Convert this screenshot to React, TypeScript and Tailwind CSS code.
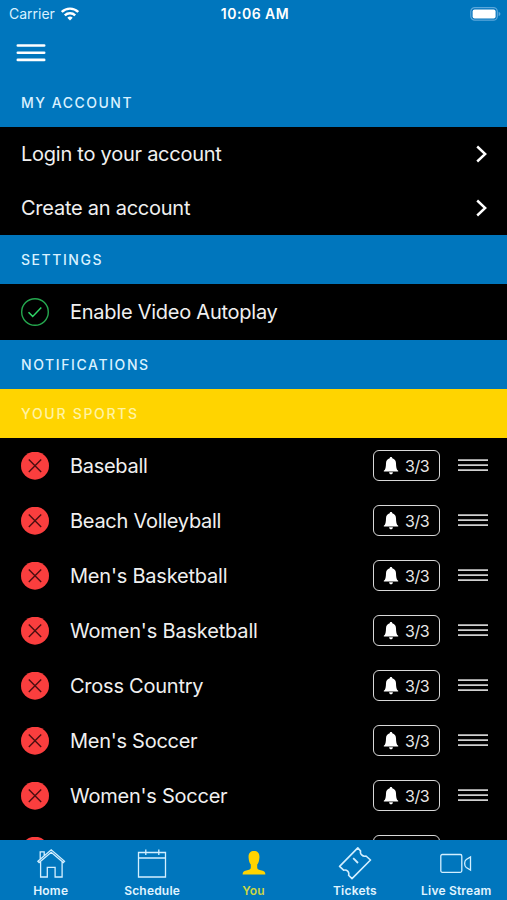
import React from "react";

const SPORTS: { name: string; tracking: string }[] = [
  { name: "Baseball", tracking: "tracking-[-0.3px]" },
  { name: "Beach Volleyball", tracking: "tracking-[-0.27px]" },
  { name: "Men's Basketball", tracking: "tracking-[-0.21px]" },
  { name: "Women's Basketball", tracking: "tracking-[-0.17px]" },
  { name: "Cross Country", tracking: "tracking-[-0.24px]" },
  { name: "Men's Soccer", tracking: "tracking-[-0.27px]" },
  { name: "Women's Soccer", tracking: "tracking-[-0.24px]" },
];

function StatusBar() {
  return (
    <div className="grid h-7 grid-cols-3 items-center pr-[6px] pl-[9px] text-sm text-white">
      <div className="flex items-center gap-[6px]">
        <span className="text-[14px] text-[#d9f1ff]">Carrier</span>
        <svg width="18" height="14" viewBox="0 0 18 14" fill="none" stroke="white" strokeWidth="2.4">
          <path d="M.8 5a11.600 11.600 0 0 1 16.400 0" />
          <path d="M3.800 8.400a7.400 7.400 0 0 1 10.400 0" />
          <path d="M9 13.600 6.300 10.800a3.900 3.900 0 0 1 5.400 0Z" fill="white" stroke="none" />
        </svg>
      </div>
      <span className="text-center font-semibold tracking-[0.5px] whitespace-nowrap">10:06 AM</span>
      <svg className="justify-self-end" width="31" height="14" viewBox="0 0 31 14">
        <rect x="0.8" y="0.6" width="26.5" height="12.6" rx="4" fill="#0072bc" stroke="#5ba8db" strokeWidth="1.2" />
        <rect x="2.6" y="2.4" width="23" height="9" rx="2" fill="white" />
        <path d="M28.600 4.700c2.400.9 2.400 3.500 0 4.400Z" fill="#5ba8db" />
      </svg>
    </div>
  );
}

function SectionTitle({ label, className }: { label: string; className: string }) {
  return (
    <h2 className={`flex h-[49px] shrink-0 items-center pl-[21px] text-sm font-medium ${className}`}>
      {label}
    </h2>
  );
}

function LinkRow({ label, className }: { label: string; className: string }) {
  return (
    <div className={`flex shrink-0 items-center justify-between pr-[19px] pl-[21px] text-xl font-normal tracking-[-0.25px] ${className}`}>
      <span>{label}</span>
      <svg width="12" height="18" viewBox="0 0 12 18" fill="none" stroke="white" strokeWidth="2.4">
        <path d="M1.200 1.500 9.200 9l-8 7.500" />
      </svg>
    </div>
  );
}

function RemoveIcon() {
  return (
    <svg className="mr-[21px] shrink-0" width="28" height="28" viewBox="0 0 28 28">
      <circle cx="14" cy="13.700" r="14" fill="#fa3e3e" />
      <path d="m7.800 7.500 12.400 12.400m0-12.400L7.800 19.900" stroke="#4a0e10" strokeWidth="1.4" />
    </svg>
  );
}

function SportRow({ name, tracking }: { name: string; tracking: string }) {
  return (
    <li className="flex h-[55px] shrink-0 items-center pr-[19px] pl-[21px]">
      <RemoveIcon />
      <span className={`grow text-xl ${tracking}`}>{name}</span>
      <div className="mr-[18px] flex h-[31px] w-[67px] items-center rounded-[6px] border-[1.5px] border-[#d8d8d8] pl-[9px]">
        <svg width="16" height="18" viewBox="0 0 14 17" fill="white">
          <path d="M7 0c.8 0 1.200.5 1.200 1.100 2.200.5 3.400 2.300 3.500 4.500.1 4 .4 6.200 2.100 7.300v.8H.2v-.8c1.700-1.100 2-3.300 2.100-7.300.1-2.200 1.300-4 3.500-4.500C5.800.5 6.200 0 7 0Z" />
          <path d="M5.200 14.400h3.600c-.1 1.300-.8 2-1.800 2s-1.700-.7-1.800-2Z" />
        </svg>
        <span className="ml-[6px] text-base tracking-[-0.4px] text-[#e8e8e8]">3/3</span>
      </div>
      <svg width="30" height="16" viewBox="0 0 30 16" stroke="#d0d0d0" strokeWidth="1.7">
        <path d="M0 2.200h30M0 7.200h30M0 12.200h30" />
      </svg>
    </li>
  );
}

function Tab({ label, active, children }: { label: string; active?: boolean; children: React.ReactNode }) {
  return (
    <div className={`flex flex-1 flex-col items-center ${active ? "text-[#ffd400]" : "text-[#d3efff]"}`}>
      <svg className="mt-[7px]" width="34" height="34" viewBox="0 0 34 34" fill="none" stroke="currentColor" strokeWidth="1.3">
        {children}
      </svg>
      <span className={`mt-[2px] text-[12px] leading-4 font-semibold tracking-[0.2px] whitespace-nowrap ${active ? "text-[#ccd644]" : "text-[#e0f4ff]"}`}>
        {label}
      </span>
    </div>
  );
}

export default function App() {
  return (
    <div className="flex h-[900px] w-[507px] flex-col overflow-hidden bg-black font-['Inter','Liberation_Sans',sans-serif] text-[#f0f0f0]">
      <header className="h-[78px] shrink-0 bg-[#0076bd]">
        <StatusBar />
        <svg className="mt-[15px] ml-4" width="30" height="20" viewBox="0 0 30 20" stroke="white" strokeWidth="2.6" strokeLinecap="round">
          <path d="M1.800 2.500h26.400M1.800 9.700h26.400M1.800 16.900h26.400" />
        </svg>
      </header>
      <SectionTitle label="MY ACCOUNT" className="bg-[#0076bd] tracking-[1.5px] text-[#d9f1ff]" />
      <LinkRow label="Login to your account" className="h-[54px]" />
      <LinkRow label="Create an account" className="h-[54px]" />
      <SectionTitle label="SETTINGS" className="bg-[#0076bd] tracking-[1.55px] text-[#d9f1ff]" />
      <div className="flex h-[56px] shrink-0 items-center pl-[21px]">
        <svg className="mr-[21px]" width="28" height="28" viewBox="0 0 28 28" fill="none">
          <circle cx="14" cy="14" r="13.300" stroke="#25a84f" strokeWidth="1.4" />
          <path d="m7.500 14.200 4.200 4.200L20.300 9.500" stroke="#2fd566" strokeWidth="1.5" />
        </svg>
        <span className="text-xl tracking-[-0.25px]">Enable Video Autoplay</span>
      </div>
      <SectionTitle label="NOTIFICATIONS" className="bg-[#0076bd] tracking-[1.6px] text-[#d9f1ff]" />
      <SectionTitle label="YOUR SPORTS" className="bg-[#ffd400] tracking-[1.7px] text-[#fff3a3]" />
      <ul className="flex min-h-0 grow flex-col overflow-hidden">
        {SPORTS.map((sport) => (
          <SportRow key={sport.name} {...sport} />
        ))}
        <li className="flex h-[55px] shrink-0 items-center justify-between pr-[67px] pl-[21px]">
          <RemoveIcon />
          <div className="h-[31px] w-[67px] rounded-[6px] border-[1.5px] border-[#d8d8d8]" />
        </li>
      </ul>
      <nav className="flex h-[60px] shrink-0 bg-[#0076bd]">
        <Tab label="Home">
          <path d="M3.900 14.200 17.200 2.800l13.300 11.400-1.200 1.300L17.200 5.300 5.100 15.500ZM6.200 12V4.800h4v3.700M6.600 15v15h6.700v-9.700h7.800V30h7V15" />
        </Tab>
        <Tab label="Schedule">
          <path d="M3.500 5.500h27v24.500h-27ZM3.500 11h27M10.800 2.500v5.500M23.800 2.500v5.500" />
        </Tab>
        <Tab label="You" active>
          <path d="M17 4c3.600 0 5.800 2.300 5.400 6.700-.2 3.400-1.100 5.500-2.200 6.800v3c0 2 1.600 2.300 4.600 3.100 2.600.7 3.400 1.500 3.600 3.800H5.600c.2-2.300 1-3.100 3.600-3.800 3-.8 4.600-1.100 4.600-3.100v-3c-1.100-1.300-2-3.400-2.200-6.800C11.200 6.300 13.400 4 17 4Z" fill="currentColor" stroke="none" />
        </Tab>
        <Tab label="Tickets">
          <path d="M19.800.9 22.600 4c-.9 2.800 2 6 5.400 5l4.500 4L14 31.600l-3.400-3.400c1-3.200-1.800-6-5-5l-4-3.800Z" strokeWidth="1.600" strokeLinejoin="round" />
          <path d="m15.200 11.200 4.800 4.800" strokeWidth="1.800" />
        </Tab>
        <Tab label="Live Stream">
          <rect x="1.800" y="7.500" width="21" height="17.800" rx="1.500" />
          <path d="M31.500 10v13l-4.200-2.500c-2.200-1.600-2.200-6.400 0-8Z" />
        </Tab>
      </nav>
    </div>
  );
}
